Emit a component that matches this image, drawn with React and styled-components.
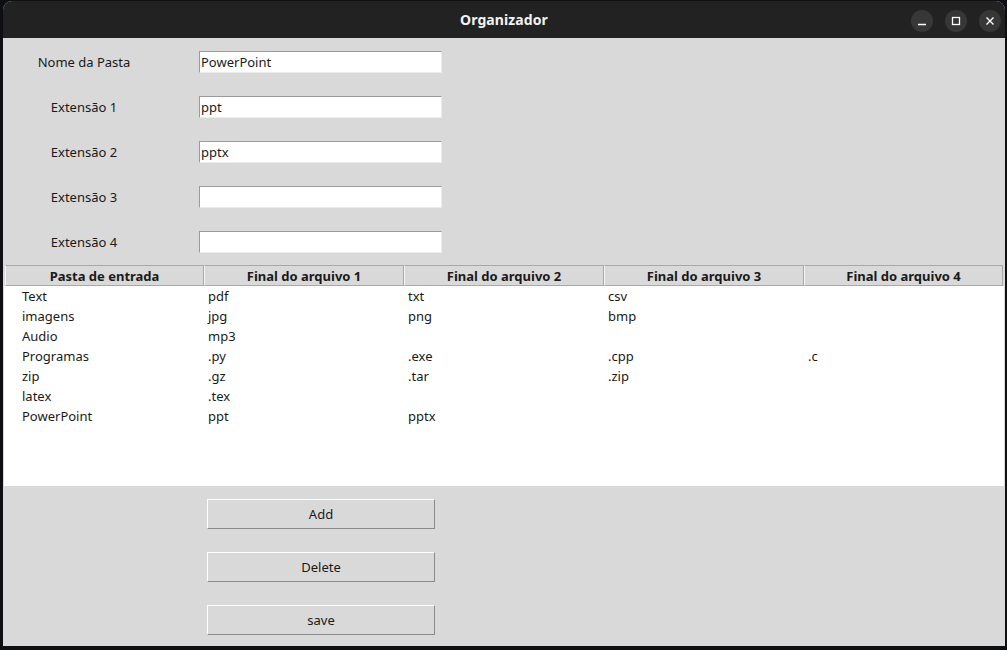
import React from 'react'
import styled, { createGlobalStyle } from 'styled-components'

const GlobalStyle = createGlobalStyle`
  html, body {
    margin: 0;
    padding: 0;
    background: #0d0f12;
    font-family: "Noto Sans", "Open Sans", sans-serif;
  }
`

const fields = [
  { label: 'Nome da Pasta', value: 'PowerPoint' },
  { label: 'Extensão 1', value: 'ppt' },
  { label: 'Extensão 2', value: 'pptx' },
  { label: 'Extensão 3', value: '' },
  { label: 'Extensão 4', value: '' },
]

const columns = [
  'Pasta de entrada',
  'Final do arquivo 1',
  'Final do arquivo 2',
  'Final do arquivo 3',
  'Final do arquivo 4',
]

const rows = [
  ['Text', 'pdf', 'txt', 'csv', ''],
  ['imagens', 'jpg', 'png', 'bmp', ''],
  ['Audio', 'mp3', '', '', ''],
  ['Programas', '.py', '.exe', '.cpp', '.c'],
  ['zip', '.gz', '.tar', '.zip', ''],
  ['latex', '.tex', '', '', ''],
  ['PowerPoint', 'ppt', 'pptx', '', ''],
]

const App = () => {
  return (
    <>
      <GlobalStyle />
      <Window>
        <TitleBar>
          <Title>Organizador</Title>
          <Controls>
            <CircleButton aria-label="minimize">
              <svg width="10" height="10" viewBox="0 0 10 10">
                <line x1="1" y1="8.5" x2="9" y2="8.5" stroke="#fff" strokeWidth="1.4" />
              </svg>
            </CircleButton>
            <CircleButton aria-label="maximize">
              <svg width="10" height="10" viewBox="0 0 10 10">
                <rect x="1.5" y="1.5" width="7" height="7" fill="none" stroke="#fff" strokeWidth="1.3" />
              </svg>
            </CircleButton>
            <CircleButton aria-label="close">
              <svg width="10" height="10" viewBox="0 0 10 10">
                <path d="M1.5 1.5 L8.5 8.5 M8.5 1.5 L1.5 8.5" stroke="#fff" strokeWidth="1.4" />
              </svg>
            </CircleButton>
          </Controls>
        </TitleBar>

        <Content>
          <Form>
            {fields.map((f) => (
              <FieldRow key={f.label}>
                <Label>{f.label}</Label>
                <Entry defaultValue={f.value} />
              </FieldRow>
            ))}
          </Form>

          <Table>
            <HeaderRow>
              {columns.map((c) => (
                <HeaderCell key={c}>{c}</HeaderCell>
              ))}
            </HeaderRow>
            <Body>
              {rows.map((r, i) => (
                <Row key={i}>
                  {r.map((cell, j) => (
                    <Cell key={j} $first={j === 0}>{cell}</Cell>
                  ))}
                </Row>
              ))}
            </Body>
          </Table>

          <Buttons>
            <Button>Add</Button>
            <Button>Delete</Button>
            <Button>save</Button>
          </Buttons>
        </Content>
      </Window>
    </>
  )
}

const Window = styled.div`
  margin: 1px 2px 0 3px;
  width: 1002px;
  height: 645px;
  display: flex;
  flex-direction: column;
  border-radius: 9px 9px 0 0;
  overflow: hidden;
  background: #d9d9d9;
`

const TitleBar = styled.div`
  height: 37px;
  flex: none;
  background: #222222;
  display: flex;
  align-items: center;
  justify-content: center;
  position: relative;
`

const Title = styled.div`
  color: #f2f2f2;
  font-size: 14px;
  font-weight: 700;
  letter-spacing: 0.1px;
`

const Controls = styled.div`
  position: absolute;
  right: 4px;
  top: 9px;
  display: flex;
  gap: 12px;
`

const CircleButton = styled.div`
  width: 22px;
  height: 22px;
  border-radius: 50%;
  background: #373737;
  display: flex;
  align-items: center;
  justify-content: center;
`

const Content = styled.div`
  flex: 1;
  display: flex;
  flex-direction: column;
  background: #d9d9d9;
  color: #1a1a1a;
  font-size: 13px;
`

const Form = styled.div`
  display: flex;
  flex-direction: column;
  gap: 23px;
  padding: 13px 0 0 1px;
`

const FieldRow = styled.div`
  display: flex;
  align-items: center;
  height: 22px;
`

const Label = styled.div`
  width: 160px;
  text-align: center;
`

const Entry = styled.input`
  margin-left: 35px;
  width: 243px;
  height: 22px;
  box-sizing: border-box;
  background: #ffffff;
  border: 1px solid #ececec;
  border-top-color: #9a9a9a;
  border-left-color: #9a9a9a;
  padding: 0 1px;
  font-family: "Noto Sans", "Open Sans", sans-serif;
  font-size: 13px;
  color: #1a1a1a;
  outline: none;
`

const Table = styled.div`
  margin: 12px 1px 0 1px;
  display: flex;
  flex-direction: column;
  background: #ffffff;
`

const HeaderRow = styled.div`
  display: grid;
  grid-template-columns: 199px 200px 200px 200px 199px;
  padding-left: 1px;
  background: #d9d9d9;
`

const HeaderCell = styled.div`
  height: 21px;
  box-sizing: border-box;
  border-top: 1px solid #a8a8a8;
  border-left: 1px solid #f4f4f4;
  border-right: 1px solid #a8a8a8;
  border-bottom: 1px solid #a8a8a8;
  display: flex;
  align-items: center;
  justify-content: center;
  font-weight: 700;
`

const Body = styled.div`
  height: 200px;
`

const Row = styled.div`
  display: grid;
  grid-template-columns: 199px 200px 200px 200px 199px;
  height: 20px;
  align-items: center;
  padding-left: 1px;
`

const Cell = styled.div`
  padding-left: ${({ $first }) => ($first ? '17px' : '4px')};
  white-space: nowrap;
`

const Buttons = styled.div`
  display: flex;
  flex-direction: column;
  gap: 23px;
  padding: 13px 0 0 204px;
`

const Button = styled.button`
  width: 228px;
  height: 30px;
  box-sizing: border-box;
  background: #d9d9d9;
  border: 1px solid #8a8a8a;
  border-top-color: #ffffff;
  border-left-color: #ffffff;
  font-family: "Noto Sans", "Open Sans", sans-serif;
  font-size: 13px;
  color: #1a1a1a;
  padding: 0;
`

export default App
